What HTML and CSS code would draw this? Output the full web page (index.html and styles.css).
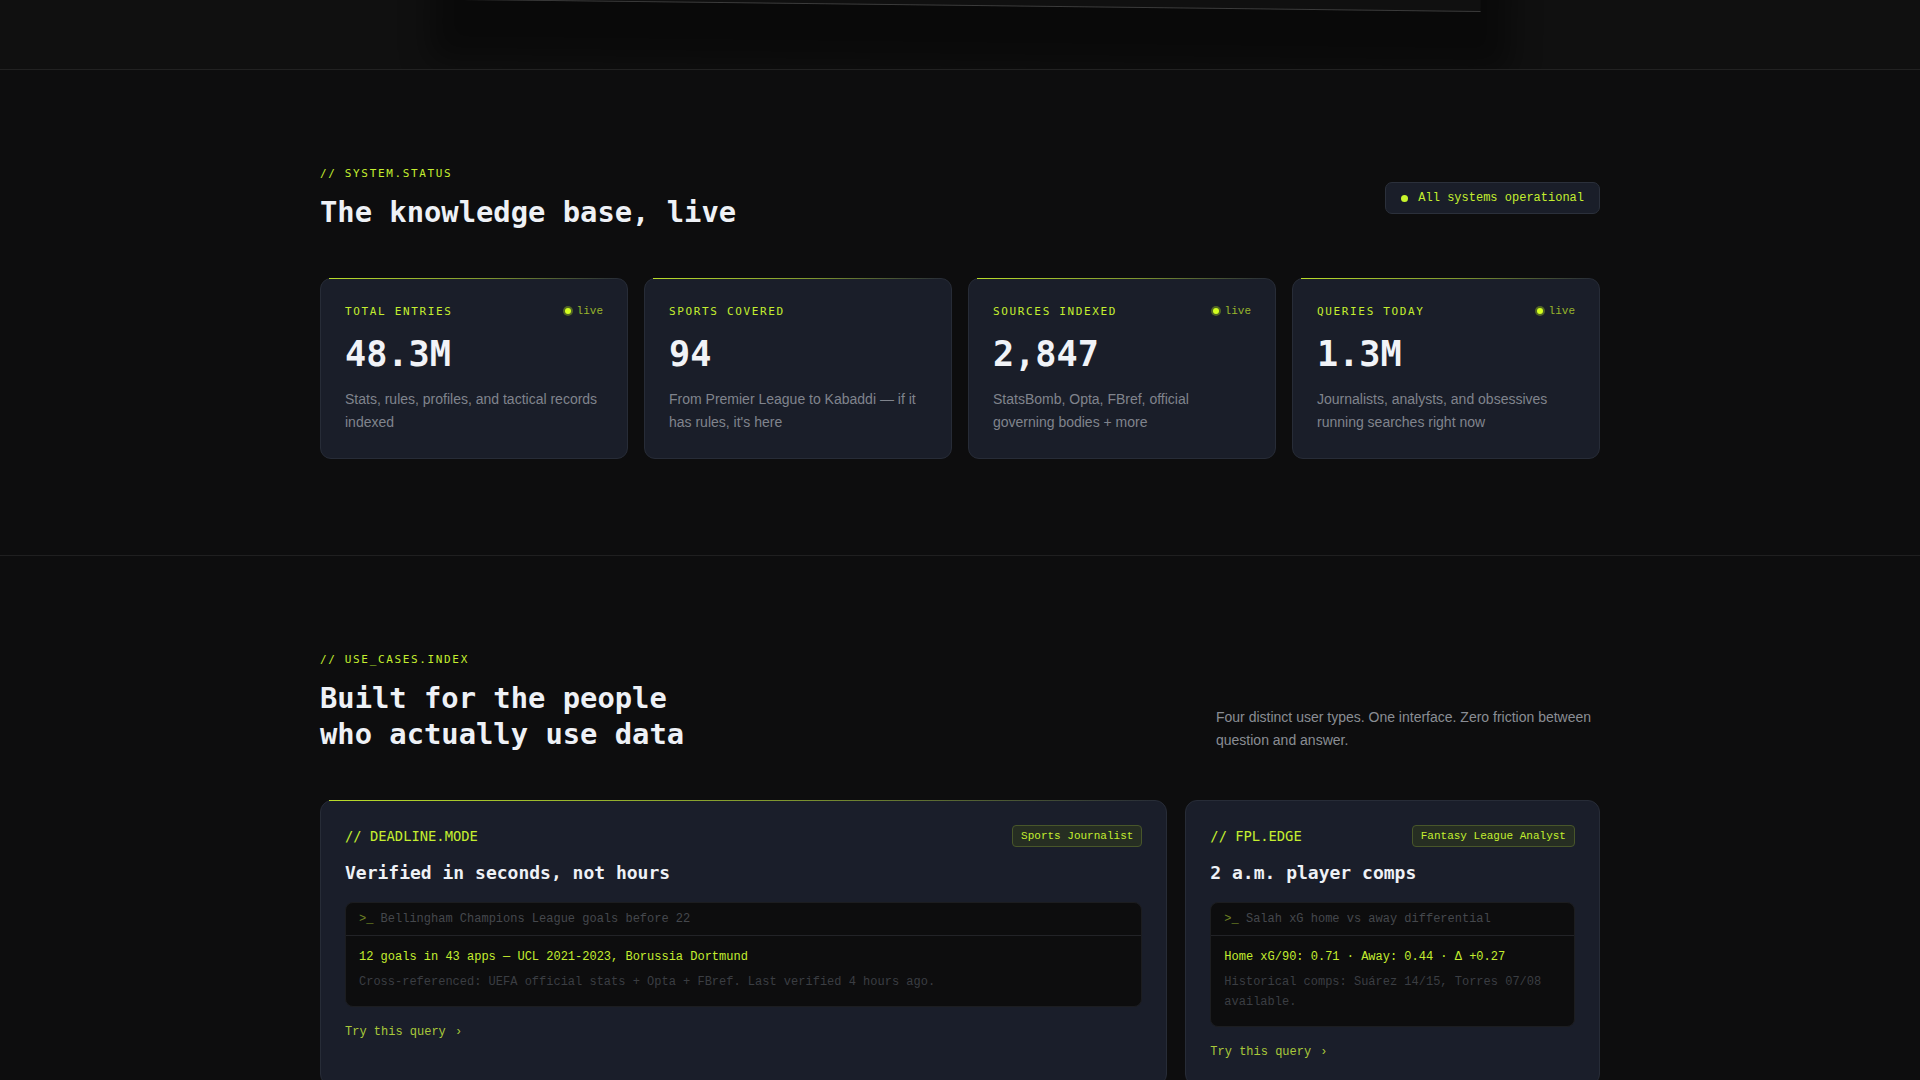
FILE: index.html
```html
<!DOCTYPE html>
<html lang="en">
<head>
  <meta charset="UTF-8" />
  <meta name="viewport" content="width=device-width, initial-scale=1.0" />
  <title>Sports Knowledge Base</title>
  <link rel="stylesheet" href="styles.css">
</head>
<body>
  <div class="hero-tail">
    <div class="hero-shot"></div>
  </div>

  <section class="section">
    <div class="container">
      <div class="section-head">
        <div>
          <div class="eyebrow">// SYSTEM.STATUS</div>
          <h2 class="section-title">The knowledge base, live</h2>
        </div>
        <div class="status-pill"><span class="status-dot"></span>All systems operational</div>
      </div>

      <div class="stat-grid">
        <div class="stat-card">
          <div class="stat-top">
            <span class="stat-label">TOTAL ENTRIES</span>
            <span class="live"><span class="live-dot"></span>live</span>
          </div>
          <div class="stat-value">48.3M</div>
          <p class="stat-desc">Stats, rules, profiles, and tactical records indexed</p>
        </div>
        <div class="stat-card">
          <div class="stat-top">
            <span class="stat-label">SPORTS COVERED</span>
          </div>
          <div class="stat-value">94</div>
          <p class="stat-desc">From Premier League to Kabaddi — if it has rules, it's here</p>
        </div>
        <div class="stat-card">
          <div class="stat-top">
            <span class="stat-label">SOURCES INDEXED</span>
            <span class="live"><span class="live-dot"></span>live</span>
          </div>
          <div class="stat-value">2,847</div>
          <p class="stat-desc">StatsBomb, Opta, FBref, official governing bodies + more</p>
        </div>
        <div class="stat-card">
          <div class="stat-top">
            <span class="stat-label">QUERIES TODAY</span>
            <span class="live"><span class="live-dot"></span>live</span>
          </div>
          <div class="stat-value">1.3M</div>
          <p class="stat-desc">Journalists, analysts, and obsessives running searches right now</p>
        </div>
      </div>
    </div>
  </section>

  <section class="section">
    <div class="container">
      <div class="section-head section-head-end">
        <div>
          <div class="eyebrow">// USE_CASES.INDEX</div>
          <h2 class="section-title">Built for the people<br>who actually use data</h2>
        </div>
        <p class="section-intro">Four distinct user types. One interface. Zero friction between question and answer.</p>
      </div>

      <div class="case-grid">
        <div class="case-card case-wide case-featured">
          <div class="case-top">
            <span class="case-mode">// DEADLINE.MODE</span>
            <span class="case-tag">Sports Journalist</span>
          </div>
          <h3 class="case-title">Verified in seconds, not hours</h3>
          <div class="terminal">
            <div class="term-query"><span class="prompt">&gt;_</span> Bellingham Champions League goals before 22</div>
            <div class="term-body">
              <div class="term-answer">12 goals in 43 apps — UCL 2021-2023, Borussia Dortmund</div>
              <div class="term-meta">Cross-referenced: UEFA official stats + Opta + FBref. Last verified 4 hours ago.</div>
            </div>
          </div>
          <a class="case-link" href="#">Try this query <span class="chev">›</span></a>
        </div>

        <div class="case-card">
          <div class="case-top">
            <span class="case-mode">// FPL.EDGE</span>
            <span class="case-tag">Fantasy League Analyst</span>
          </div>
          <h3 class="case-title">2 a.m. player comps</h3>
          <div class="terminal">
            <div class="term-query"><span class="prompt">&gt;_</span> Salah xG home vs away differential</div>
            <div class="term-body">
              <div class="term-answer">Home xG/90: 0.71 · Away: 0.44 · Δ +0.27</div>
              <div class="term-meta">Historical comps: Suárez 14/15, Torres 07/08 available.</div>
            </div>
          </div>
          <a class="case-link" href="#">Try this query <span class="chev">›</span></a>
        </div>

        <div class="case-card">
          <div class="case-top">
            <span class="case-mode">// RULES.CHECK</span>
            <span class="case-tag">Match Official</span>
          </div>
          <h3 class="case-title">Law 12, instantly</h3>
          <div class="terminal">
            <div class="term-query"><span class="prompt">&gt;_</span> Handball rule changes since 2019</div>
            <div class="term-body">
              <div class="term-answer">4 IFAB amendments · latest 2021/22</div>
              <div class="term-meta">Source: IFAB Laws of the Game, official circulars.</div>
            </div>
          </div>
          <a class="case-link" href="#">Try this query <span class="chev">›</span></a>
        </div>

        <div class="case-card case-wide">
          <div class="case-top">
            <span class="case-mode">// TACTICS.LAB</span>
            <span class="case-tag">Performance Analyst</span>
          </div>
          <h3 class="case-title">Pressing data without the spreadsheet</h3>
          <div class="terminal">
            <div class="term-query"><span class="prompt">&gt;_</span> Arsenal PPDA by month 2023/24</div>
            <div class="term-body">
              <div class="term-answer">Avg PPDA 8.9 — lowest in Dec (7.4), highest in Apr (10.2)</div>
              <div class="term-meta">Computed from StatsBomb event data. Updated after every matchday.</div>
            </div>
          </div>
          <a class="case-link" href="#">Try this query <span class="chev">›</span></a>
        </div>
      </div>
    </div>
  </section>
</body>
</html>
```

FILE: styles.css
```css
body {
  margin: 0;
  background-color: #0d0d0e;
  color: #eef1f6;
  font-family: "Liberation Sans", Arial, sans-serif;
}
.container {
  width: 1280px;
  margin: 0 auto;
}

/* tail of the hero above */
.hero-tail {
  position: relative;
  height: 69px;
  overflow: hidden;
  background: #101010;
  border-bottom: 1px solid #222;
}
.hero-shot {
  position: absolute;
  left: 50%;
  bottom: 63px;
  width: 1020px;
  height: 240px;
  margin-left: -498px;
  background: #101010;
  border-bottom: 1px solid #3b3b3b;
  transform: rotate(0.67deg);
  box-shadow: 0 30px 30px 30px rgba(0,0,0,0.4);
}

.section {
  padding: 96px 0;
  border-bottom: 1px solid #1f1f20;
}
.section-head {
  display: flex;
  justify-content: space-between;
  align-items: center;
  margin-bottom: 48px;
}
.section-head-end {
  align-items: flex-end;
}
.eyebrow {
  font-family: "DejaVu Sans Mono", monospace;
  font-size: 11px;
  line-height: 16px;
  letter-spacing: 0.15em;
  color: #c4ee2f;
  margin-bottom: 12px;
}
.section-title {
  margin: 0;
  font-family: "DejaVu Sans Mono", monospace;
  font-size: 28.8px;
  line-height: 36px;
  font-weight: bold;
  color: #eef1f6;
}
.section-intro {
  margin: 0;
  width: 384px;
  font-size: 14px;
  line-height: 23px;
  color: #8a8d94;
}

.status-pill {
  display: flex;
  align-items: center;
  gap: 10px;
  padding: 0 15px;
  height: 30px;
  background: #1a1e29;
  border: 1px solid #2b303b;
  border-radius: 7px;
  font-family: "Liberation Mono", monospace;
  font-size: 12px;
  color: #c4ee2f;
}
.status-dot {
  width: 7px;
  height: 7px;
  border-radius: 50%;
  background: #c8f52c;
}

/* stat cards */
.stat-grid {
  display: grid;
  grid-template-columns: repeat(4, 1fr);
  gap: 16px;
}
.stat-card {
  position: relative;
  padding: 24px;
  background: #1a1e29;
  border: 1px solid #272c37;
  border-radius: 11px;
}
.stat-card::before, .case-featured::before {
  content: "";
  position: absolute;
  top: -1px;
  left: 8px;
  right: 8px;
  height: 1px;
  background: linear-gradient(90deg, #b9dc2a, rgba(185,220,42,0.6) 55%, rgba(185,220,42,0));
}
.stat-top {
  display: flex;
  justify-content: space-between;
  align-items: center;
  height: 16px;
  margin-bottom: 17px;
}
.stat-label {
  font-family: "DejaVu Sans Mono", monospace;
  font-size: 11px;
  letter-spacing: 0.15em;
  color: #c4ee2f;
}
.live {
  display: flex;
  align-items: center;
  gap: 6px;
  font-family: "Liberation Mono", monospace;
  font-size: 11px;
  color: #98b52c;
}
.live-dot {
  width: 6px;
  height: 6px;
  border-radius: 50%;
  background: #d4ff1f;
  box-shadow: 0 0 0 2px rgba(150,190,30,0.45);
}
.stat-value {
  font-family: "DejaVu Sans Mono", monospace;
  font-size: 35.2px;
  line-height: 36px;
  font-weight: bold;
  color: #f1f3f7;
  margin-bottom: 16px;
}
.stat-desc {
  margin: 0;
  font-size: 14px;
  line-height: 23px;
  color: #80848d;
}

/* use case cards */
.case-grid {
  display: grid;
  grid-template-columns: repeat(3, 1fr);
  gap: 18px;
}
.case-card {
  position: relative;
  padding: 24px;
  background: #1a1e2a;
  border: 1px solid #272c37;
  border-radius: 12px;
}
.case-wide {
  grid-column: span 2;
}
.case-top {
  display: flex;
  justify-content: space-between;
  align-items: center;
  margin-bottom: 12px;
}
.case-mode {
  font-family: "DejaVu Sans Mono", monospace;
  font-size: 13.8px;
  color: #c4ee2f;
}
.case-tag {
  padding: 3px 8px;
  font-family: "Liberation Mono", monospace;
  font-size: 11px;
  line-height: 14px;
  color: #c4ee2f;
  background: #262e22;
  border: 1px solid #48562a;
  border-radius: 4px;
}
.case-title {
  margin: 0 0 16px;
  font-family: "DejaVu Sans Mono", monospace;
  font-size: 18px;
  line-height: 27px;
  font-weight: bold;
  color: #eef1f6;
}
.terminal {
  background: #0d0d0e;
  border: 1px solid #1c1d20;
  border-radius: 8px;
  font-family: "Liberation Mono", monospace;
  font-size: 12px;
}
.term-query {
  padding: 7px 13px;
  line-height: 18px;
  color: #45484d;
  border-bottom: 1px solid #222327;
}
.prompt {
  color: #6d8324;
}
.term-body {
  padding: 12px 13px 14px;
}
.term-answer {
  line-height: 18px;
  color: #c4ee2f;
}
.term-meta {
  margin-top: 6px;
  line-height: 20px;
  color: #3b3e43;
}
.case-link {
  display: inline-block;
  margin-top: 16px;
  font-family: "Liberation Mono", monospace;
  font-size: 12px;
  line-height: 18px;
  color: #a9c93a;
  text-decoration: none;
}
.chev {
  margin-left: 2px;
}
```
